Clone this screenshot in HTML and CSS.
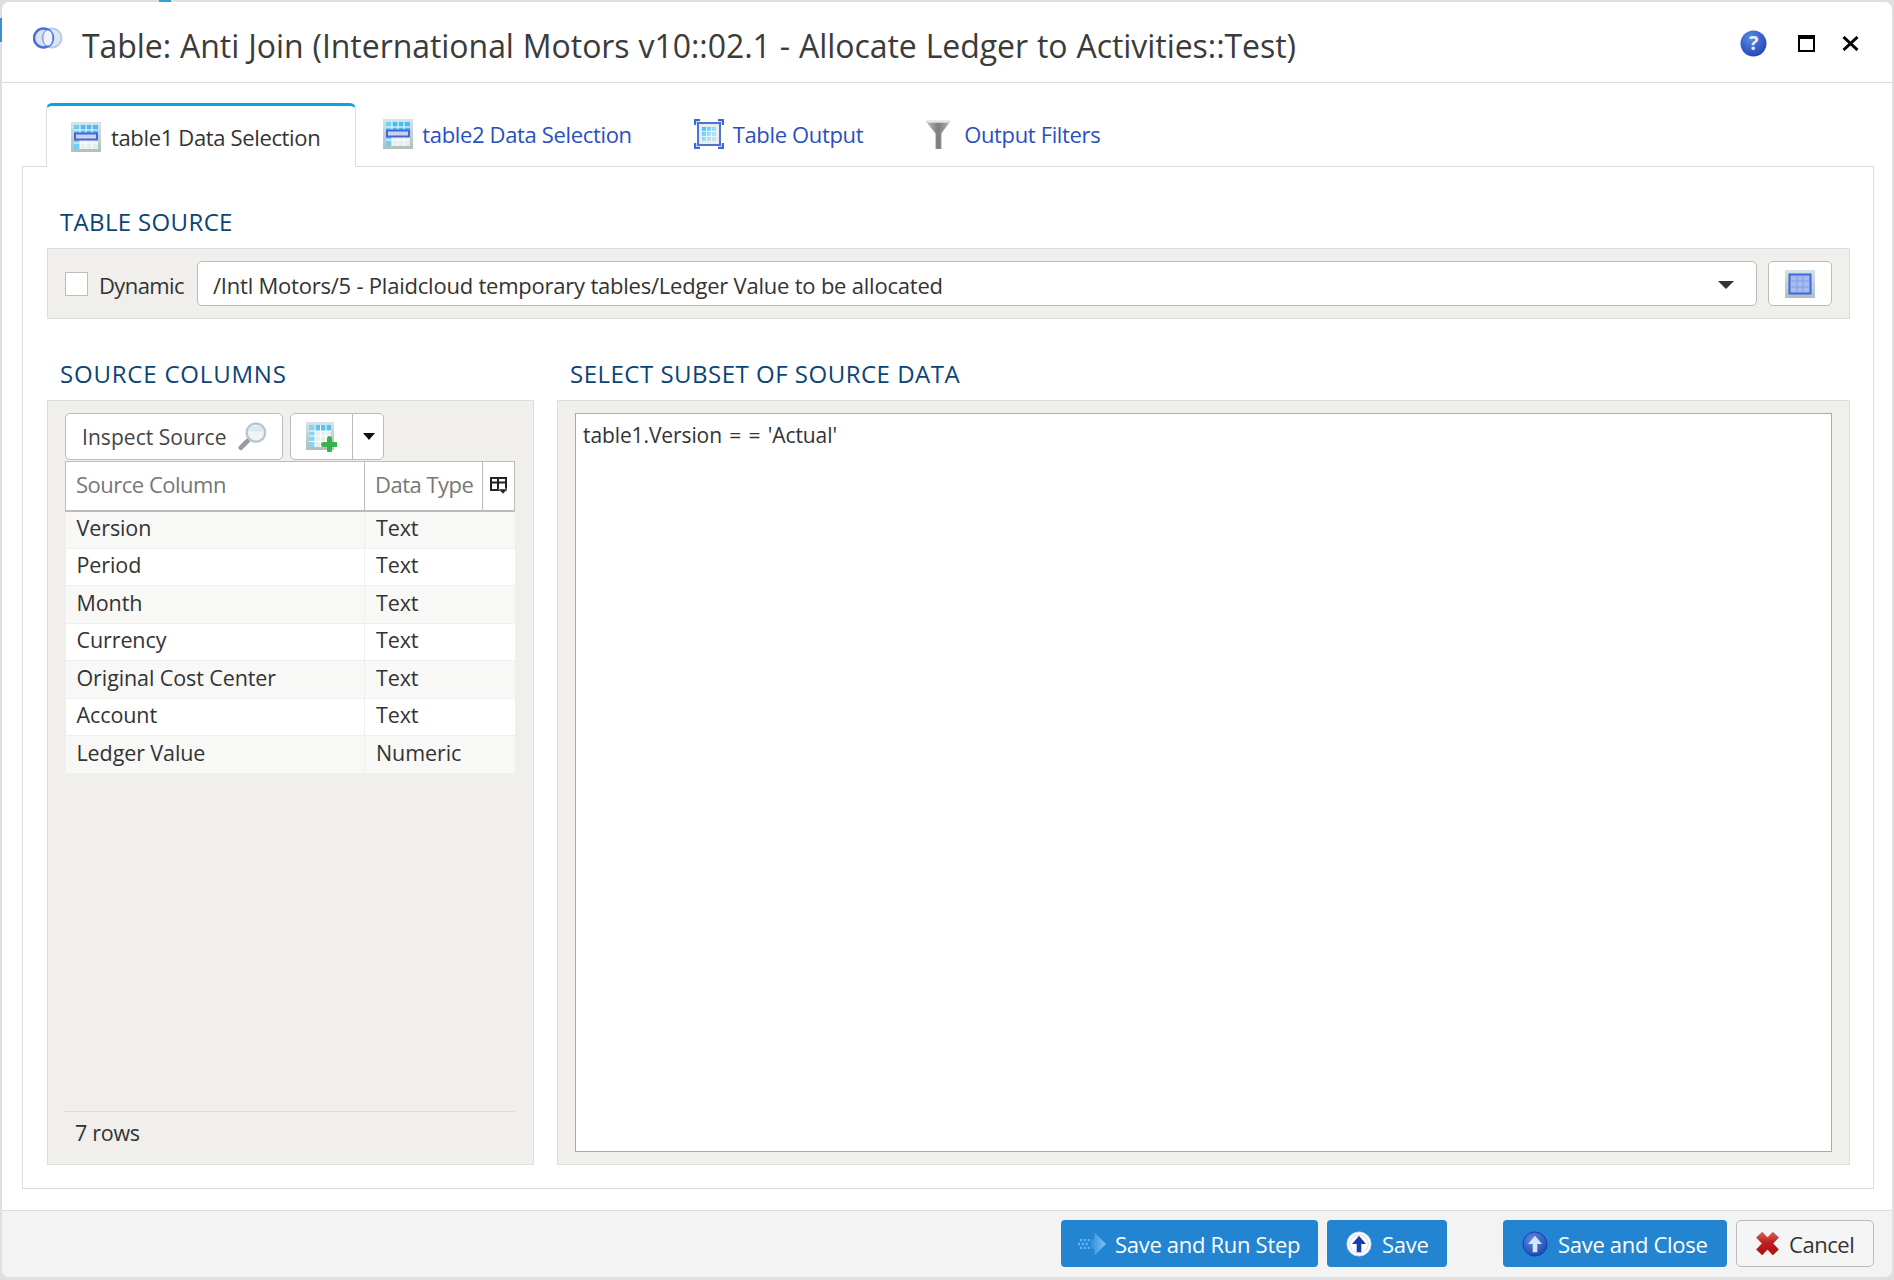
FILE: index.html
```html
<!DOCTYPE html>
<html lang="en">
<head>
  <meta charset="UTF-8" />
  <title>Table: Anti Join</title>
  <link rel="stylesheet" href="styles.css">
</head>
<body>
  <!-- Bits of the page behind the dialog -->
  <div class="behind-top"></div>
  <div class="behind-left"></div>

  <svg class="defs" width="0" height="0">
    <defs>
      <linearGradient id="cellBlue" x1="0" y1="0" x2="1" y2="1">
        <stop offset="0" stop-color="#3fb6f2" />
        <stop offset="0.55" stop-color="#a9dff5" />
        <stop offset="1" stop-color="#d8dfdc" />
      </linearGradient>
      <linearGradient id="frameGrey" x1="0" y1="0" x2="0" y2="1">
        <stop offset="0" stop-color="#d5e4e6" />
        <stop offset="1" stop-color="#aebfbd" />
      </linearGradient>
      <linearGradient id="funnelGrey" x1="0" y1="0" x2="1" y2="0">
        <stop offset="0" stop-color="#c4c4c4" />
        <stop offset="0.5" stop-color="#7d7d7d" />
        <stop offset="1" stop-color="#b5b5b5" />
      </linearGradient>
      <linearGradient id="arrowBlue" x1="0" y1="0" x2="1" y2="0">
        <stop offset="0" stop-color="#2f8fd8" />
        <stop offset="1" stop-color="#7cc4f4" />
      </linearGradient>
      <linearGradient id="redX" gradientUnits="userSpaceOnUse" x1="0" y1="0" x2="0" y2="24">
        <stop offset="0" stop-color="#d96a62" />
        <stop offset="0.45" stop-color="#c21f1c" />
        <stop offset="1" stop-color="#a80f0f" />
      </linearGradient>
      <radialGradient id="ballBlue" cx="0.4" cy="0.3" r="0.8">
        <stop offset="0" stop-color="#5b8ae6" />
        <stop offset="1" stop-color="#1c3fb0" />
      </radialGradient>
      <symbol id="tableIcon" viewBox="0 0 30 30">
        <rect width="30" height="30" fill="url(#frameGrey)" />
        <rect x="3" y="3" width="24" height="24" fill="#e6eeee" />
        <rect x="3" y="3" width="24" height="8" fill="#49bdf2" />
        <rect x="3" y="3" width="6" height="24" fill="#72cdf4" />
        <path d="M3 8h24M3 21h24M9 3v24M15 3v24M21 3v24" stroke="#fff" />
        <rect x="4" y="11.500" width="22" height="6" fill="#c9d4f2" stroke="#4a63d6" stroke-width="2" />
      </symbol>
    </defs>
  </svg>

  <div class="dialog">
    <header class="dialog-head">
      <svg class="join-icon" viewBox="0 0 30 22">
        <circle cx="19" cy="11" r="9.500" fill="#dbe7f3" stroke="#b5cbe6" stroke-width="2" />
        <circle cx="10.500" cy="11" r="9.500" fill="#b9c9f0" fill-opacity="0.55" stroke="#4a6fd8" stroke-width="2.500" />
        <ellipse cx="14.800" cy="11" rx="5" ry="8" fill="#eef3f8" stroke="#6d8fd6" />
      </svg>
      <h1 class="dialog-title">Table: Anti Join (International Motors v10::02.1 - Allocate Ledger to Activities::Test)</h1>
      <div class="dialog-controls">
        <svg class="help-icon" viewBox="0 0 27 27">
          <circle cx="13.500" cy="13.500" r="13" fill="url(#ballBlue)" />
          <text x="13.500" y="20" text-anchor="middle" class="help-mark">?</text>
        </svg>
        <span class="max-icon"></span>
        <svg class="close-icon" viewBox="0 0 17 15">
          <path d="M1.500 1l14 13M15.500 1l-14 13" stroke="#000" stroke-width="3" />
        </svg>
      </div>
    </header>

    <nav class="tabs">
      <a class="tab tab-active"><svg class="tab-icon"><use href="#tableIcon" /></svg>table1 Data Selection</a>
      <a class="tab"><svg class="tab-icon"><use href="#tableIcon" /></svg>table2 Data Selection</a>
      <a class="tab">
        <svg class="tab-icon" viewBox="0 0 30 30">
          <path d="M1 6V1h5M24 1h5v5M29 24v5h-5M6 29H1v-5" fill="none" stroke="#3c66e4" stroke-width="2.500" />
          <rect x="4" y="4" width="22" height="22" fill="#e6eef2" stroke="#4f74cc" stroke-width="2" />
          <rect x="8" y="8" width="14" height="14" fill="url(#cellBlue)" />
          <path d="M8 12.500h14M8 17.500h14M12.500 8v14M17.500 8v14" stroke="#fff" stroke-opacity="0.7" />
        </svg>Table Output
      </a>
      <a class="tab">
        <svg class="tab-icon funnel" viewBox="0 0 26 31">
          <path d="M0 2h26L16.500 15v16h-6V15z" fill="url(#funnelGrey)" />
          <path d="M1 2.500h24" stroke="#e3e3e3" stroke-width="2.500" />
        </svg>Output Filters
      </a>
    </nav>

    <main class="panel">
      <h2 class="heading">TABLE SOURCE</h2>
      <div class="source-bar">
        <span class="checkbox"></span>
        <span class="check-label">Dynamic</span>
        <div class="select">
          <span>/Intl Motors/5 - Plaidcloud temporary tables/Ledger Value to be allocated</span>
          <span class="caret caret-big"></span>
        </div>
        <button class="btn-plain btn-table">
          <svg class="grid-icon" viewBox="0 0 30 28">
            <rect width="30" height="28" fill="url(#frameGrey)" />
            <rect x="3.500" y="3.500" width="23" height="21" fill="#3c68e0" />
            <rect x="5.500" y="5.500" width="19" height="17" fill="#a7bcec" />
            <path d="M5.500 11h19M5.500 17h19M12 5.500v17M18 5.500v17" stroke="#7f9fe6" />
          </svg>
        </button>
      </div>

      <div class="columns">
        <section class="col">
          <h2 class="heading heading-left">SOURCE COLUMNS</h2>
          <div class="well well-left">
            <div class="toolbar">
              <button class="btn-plain btn-inspect">Inspect Source
                <svg class="lens-icon" viewBox="0 0 30 30">
                  <path d="M10 19.500L3 26.500" stroke="#9a9a9a" stroke-width="5" stroke-linecap="round" />
                  <circle cx="18.500" cy="11" r="9.500" fill="#eef4f7" stroke="#bcc6c8" stroke-width="2.500" />
                  <path d="M10 9.500a9 8 0 0 1 17 0" fill="#dbe7ef" />
                </svg>
              </button>
              <div class="split">
                <span class="split-main">
                  <svg class="add-icon" viewBox="0 0 31 30">
                    <rect width="28" height="28" fill="url(#frameGrey)" />
                    <rect x="3" y="3" width="22" height="22" fill="#e6eeee" />
                    <rect x="3" y="3" width="22" height="6" fill="#58c2f3" />
                    <rect x="3" y="3" width="6" height="22" fill="#86d3f5" />
                    <path d="M3 9h22M3 14h22M3 19.500h22M9 3v22M14.500 3v22M20 3v22" stroke="#fff" />
                    <path d="M23.500 16.500v12M17.500 22.500h12" stroke="#37b24c" stroke-width="5" stroke-linecap="round" />
                  </svg>
                </span>
                <span class="split-arrow"><span class="caret"></span></span>
              </div>
            </div>
            <table class="grid">
              <colgroup><col class="c-name"><col class="c-type"><col class="c-menu"></colgroup>
              <thead>
                <tr>
                  <th>Source Column</th>
                  <th>Data Type</th>
                  <th class="menu-cell">
                    <svg class="menu-icon" viewBox="0 0 18 17">
                      <path d="M1 1h15v12H1zM1 5.500h15M8 1v12" fill="none" stroke="#222" stroke-width="2" />
                      <path d="M8.500 12h9l-4.500 5z" fill="#222" stroke="#fff" stroke-width="0.500" />
                    </svg>
                  </th>
                </tr>
              </thead>
              <tbody>
                <tr><td>Version</td><td colspan="2">Text</td></tr>
                <tr><td>Period</td><td colspan="2">Text</td></tr>
                <tr><td>Month</td><td colspan="2">Text</td></tr>
                <tr><td>Currency</td><td colspan="2">Text</td></tr>
                <tr><td>Original Cost Center</td><td colspan="2">Text</td></tr>
                <tr><td>Account</td><td colspan="2">Text</td></tr>
                <tr><td>Ledger Value</td><td colspan="2">Numeric</td></tr>
              </tbody>
            </table>
            <div class="grid-foot">7 rows</div>
          </div>
        </section>

        <section class="col">
          <h2 class="heading">SELECT SUBSET OF SOURCE DATA</h2>
          <div class="well well-right">
            <div class="editor">table1.Version = = 'Actual'</div>
          </div>
        </section>
      </div>
    </main>

    <footer class="dialog-foot">
      <button class="btn-blue btn-run">
        <svg class="foot-icon run-icon" viewBox="0 0 30 26">
          <path d="M17 1l12 12-12 12v-7H13V8h4z" fill="url(#arrowBlue)" />
          <path d="M2 9h2M6 9h2M10 9h2M0 13h2M4 13h2M8 13h2M2 17h2M6 17h2M10 17h2" stroke="#6db8ee" stroke-width="2.500" />
        </svg>Save and Run Step
      </button>
      <button class="btn-blue btn-save">
        <svg class="foot-icon" viewBox="0 0 28 28">
          <circle cx="14" cy="14" r="13" fill="#fff" stroke="#c9d6f2" />
          <circle cx="14" cy="14" r="10" fill="none" stroke="#dfe6f8" stroke-width="1.500" />
          <path d="M14 5l7.500 9h-5v9h-5v-9h-5z" fill="#1d3ea8" />
        </svg>Save
      </button>
      <button class="btn-blue btn-close">
        <svg class="foot-icon" viewBox="0 0 28 28">
          <circle cx="14" cy="14" r="13" fill="url(#ballBlue)" stroke="#1a3aa6" />
          <path d="M14 5l7.500 9h-5v9h-5v-9h-5z" fill="#d7e4f7" />
        </svg>Save and Close
      </button>
      <button class="btn-cancel">
        <svg class="foot-icon cancel-icon" viewBox="0 0 24 24">
          <path d="M4 3.500L20 20.500M20 3.500L4 20.500" stroke="url(#redX)" stroke-width="8" />
        </svg>Cancel
      </button>
    </footer>
  </div>
</body>
</html>
```

FILE: styles.css
```css
* {
  margin: 0;
  padding: 0;
  box-sizing: border-box;
  font-family: 'Open Sans', 'Noto Sans', sans-serif;
}
body {
  background-color: #dfdfdf;
  color: #333;
  width: 1894px;
  height: 1280px;
  overflow: hidden;
  padding: 2px 2px 3px 2px;
  position: relative;
  font-size: 21px;
  letter-spacing: -0.6px;
}
.defs {
  position: absolute;
}
.behind-top {
  position: absolute;
  left: 159px;
  top: 0;
  width: 12px;
  height: 2px;
  background-color: #2ba3dc;
}
.behind-left {
  position: absolute;
  left: 0;
  top: 18px;
  width: 2px;
  height: 24px;
  background-color: #3a8fd0;
}
.dialog {
  position: relative;
  height: 100%;
  background-color: #fff;
  border-radius: 7px;
  display: flex;
  flex-direction: column;
  overflow: hidden;
}

/* Title bar */
.dialog-head {
  height: 81px;
  flex: none;
  display: flex;
  align-items: center;
  border-bottom: 1px solid #dcdcdc;
  padding: 0 33px 2px 31px;
}
.join-icon {
  width: 30px;
  height: 22px;
  margin-right: 19px;
  margin-top: -6px;
}
.dialog-title {
  font-size: 32px;
  font-weight: 400;
  letter-spacing: -0.05px;
  word-spacing: 0.7px;
  color: #3b3b3b;
  white-space: nowrap;
  position: relative;
  top: 4px;
}
.dialog-controls {
  margin-left: auto;
  margin-top: 4px;
  display: flex;
  align-items: center;
}
.help-icon {
  width: 27px;
  height: 27px;
}
.help-mark {
  font-size: 20px;
  font-weight: 700;
  fill: #e6ecfa;
}
.max-icon {
  width: 17px;
  height: 17px;
  border: 2px solid #000;
  border-top-width: 4px;
  margin-left: 31px;
}
.close-icon {
  width: 17px;
  height: 15px;
  margin-left: 27px;
}

/* Tabs */
.tabs {
  flex: none;
  height: 83px;
  display: flex;
  align-items: flex-end;
  padding-left: 44px;
}
.tab {
  height: 64px;
  display: flex;
  align-items: center;
  padding: 0 35px 1px 27px;
  color: #2a4fc0;
  font-size: 22px;
  letter-spacing: -0.35px;
  white-space: nowrap;
}
.tab-active {
  position: relative;
  top: 1px;
  padding: 0 35px 0 24px;
  color: #333;
  background-color: #fff;
  border: 1px solid #dcdcdc;
  border-top: 3px solid #07a3e2;
  border-bottom: none;
  border-radius: 6px 6px 0 0;
}
.tab-icon {
  width: 30px;
  height: 30px;
  margin-right: 9px;
  flex: none;
}
.tab-active .tab-icon {
  margin-right: 10px;
}
.funnel {
  width: 26px;
  margin-right: 13px;
}

/* Main panel */
.panel {
  flex: 1;
  display: flex;
  flex-direction: column;
  margin: 0 18px 21px 20px;
  padding: 0 23px 23px 24px;
  border: 1px solid #dcdcdc;
}
.heading {
  font-size: 24px;
  font-weight: 400;
  letter-spacing: 0.35px;
  color: #0b4477;
  height: 35px;
  line-height: 33px;
  padding-left: 13px;
}
.panel > .heading {
  margin-top: 38px;
  margin-bottom: 8px;
}
.source-bar {
  height: 71px;
  flex: none;
  display: flex;
  align-items: center;
  background-color: #f0efeb;
  border: 1px solid #dedede;
  padding: 0 17px 0 17px;
}
.checkbox {
  width: 23px;
  height: 24px;
  background-color: #fff;
  border: 1px solid #bdbdbd;
  flex: none;
}
.check-label {
  margin-left: 11px;
  width: 98px;
  flex: none;
  font-size: 22px;
  position: relative;
  top: 1px;
}
.select {
  flex: 1;
  height: 45px;
  display: flex;
  align-items: center;
  justify-content: space-between;
  background-color: #fff;
  border: 1px solid #bbb;
  border-radius: 5px;
  padding: 2px 22px 0 15px;
  font-size: 22px;
  letter-spacing: -0.22px;
}
.caret {
  width: 0;
  height: 0;
  border-left: 6px solid transparent;
  border-right: 6px solid transparent;
  border-top: 7px solid #111;
  display: block;
}
.caret-big {
  border-left-width: 8px;
  border-right-width: 8px;
  border-top-width: 8px;
  border-top-color: #333;
}
.btn-plain {
  height: 45px;
  background-color: #fff;
  border: 1px solid #bbb;
  border-radius: 5px;
  font-size: 21px;
  color: #444;
  display: flex;
  align-items: center;
  justify-content: center;
}
.btn-table {
  width: 64px;
  margin-left: 11px;
  flex: none;
}
.grid-icon {
  width: 30px;
  height: 28px;
}

/* Two columns below the source bar */
.columns {
  flex: 1;
  min-height: 0;
  display: grid;
  grid-template-columns: 487px 1fr;
  column-gap: 23px;
  margin-top: 37px;
}
.col {
  display: flex;
  flex-direction: column;
}
.col .heading {
  margin-top: 0;
  margin-bottom: 9px;
  line-height: 35px;
  letter-spacing: 0.5px;
}
.col .heading-left {
  letter-spacing: 0.8px;
}
.well {
  flex: 1;
  background-color: #f0efeb;
  border: 1px solid #dedede;
  display: flex;
  flex-direction: column;
}
.well-left {
  padding: 12px 18px 0 17px;
}
.well-right {
  padding: 12px 17px;
}
.toolbar {
  display: flex;
  gap: 7px;
  height: 47px;
  flex: none;
}
.btn-inspect {
  width: 218px;
  height: 47px;
  gap: 11px;
  justify-content: flex-start;
  padding-left: 16px;
  letter-spacing: 0.05px;
}
.lens-icon {
  width: 29px;
  height: 29px;
}
.split {
  width: 94px;
  height: 47px;
  display: flex;
  background-color: #fff;
  border: 1px solid #bbb;
  border-radius: 5px;
}
.split-main {
  width: 62px;
  display: flex;
  align-items: center;
  justify-content: center;
  border-right: 1px solid #bbb;
}
.split-arrow {
  flex: 1;
  display: flex;
  align-items: center;
  justify-content: center;
  padding-left: 2px;
}
.add-icon {
  width: 31px;
  height: 30px;
}
.grid {
  margin-top: 1px;
  width: 450px;
  table-layout: fixed;
  border-collapse: collapse;
  flex: none;
}
.c-name {
  width: 299px;
}
.c-type {
  width: 118px;
}
.grid th {
  height: 49px;
  background-color: #fff;
  font-weight: 400;
  font-size: 22px;
  letter-spacing: -0.5px;
  color: #777;
  text-align: left;
  padding: 0 0 4px 10px;
  border: 1px solid #bcbcbc;
  border-bottom: 2px solid #bcbcbc;
}
.grid .menu-cell {
  padding: 0;
  text-align: center;
}
.menu-icon {
  width: 18px;
  height: 17px;
  display: block;
  margin: 0 auto;
}
.grid td {
  height: 37.5px;
  padding: 0 0 4px 11px;
  font-size: 21.5px;
  letter-spacing: -0.1px;
  color: #333;
  border-bottom: 1px solid #efefef;
  border-left: 1px solid #efefef;
  white-space: nowrap;
}
.grid td:first-child {
  padding-left: 11px;
  border-left: none;
}
.grid tbody tr:nth-child(odd) {
  background-color: #f8f8f7;
}
.grid tbody tr:nth-child(even) {
  background-color: #fff;
}
.grid-foot {
  margin-top: auto;
  height: 53px;
  width: 450px;
  border-top: 1px solid #dedcd8;
  padding: 3px 0 0 10px;
  line-height: 36px;
  font-size: 21.5px;
  letter-spacing: -0.3px;
}
.editor {
  flex: 1;
  background-color: #fff;
  border: 1px solid #aaa;
  padding: 6px 7px;
  font-size: 21px;
  line-height: 30px;
  letter-spacing: -0.1px;
  word-spacing: 2px;
}

/* Footer buttons */
.dialog-foot {
  flex: none;
  height: 67px;
  display: flex;
  align-items: flex-start;
  background-color: #f3f3f3;
  border-top: 1px solid #dcdcdc;
  padding: 9px 18px 0 0;
  justify-content: flex-end;
}
.btn-blue {
  height: 47px;
  display: flex;
  align-items: center;
  background-color: #2385d2;
  color: #fff;
  border: none;
  border-radius: 4px;
  font-size: 22px;
  letter-spacing: -0.3px;
}
.btn-run {
  width: 257px;
  padding-left: 17px;
}
.btn-save {
  width: 120px;
  margin-left: 9px;
  padding-left: 19px;
}
.btn-close {
  width: 224px;
  margin-left: 56px;
  padding-left: 19px;
}
.btn-cancel {
  width: 138px;
  height: 47px;
  margin-left: 9px;
  padding-left: 18px;
  display: flex;
  align-items: center;
  background-color: #f5f5f5;
  border: 1px solid #bbb;
  border-radius: 5px;
  font-size: 22px;
  letter-spacing: -0.45px;
  color: #333;
}
.foot-icon {
  width: 26px;
  height: 26px;
  margin-right: 10px;
  flex: none;
}
.run-icon {
  width: 29px;
  margin-right: 8px;
}
.cancel-icon {
  width: 25px;
  height: 25px;
  margin-right: 9px;
}
```
